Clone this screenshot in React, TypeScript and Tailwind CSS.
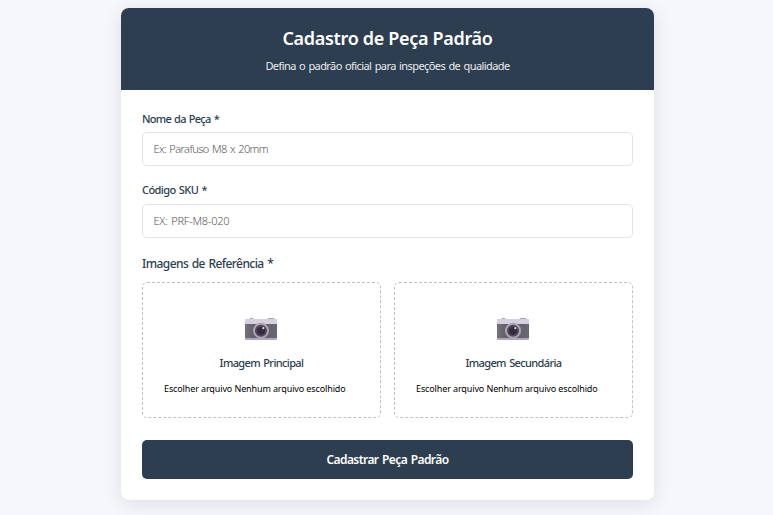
function Camera() {
  return (
    <svg width="34" height="24" viewBox="0 0 34 24" className="mr-[2px] block">
      <defs>
        <linearGradient id="cameraBody" x1="0" y1="0" x2="1" y2="0">
          <stop offset="0" stopColor="#75727c" />
          <stop offset="0.35" stopColor="#5c5965" />
          <stop offset="1" stopColor="#6b6873" />
        </linearGradient>
      </defs>
      <path d="M5 2.5L6 1.3H9L10 2.5ZM23 2.5L24 1.3H30L31 2.5Z" fill="#8b8790" />
      <rect x="1" y="2" width="32" height="21" rx="1.5" fill="#b1a4be" />
      <path d="M1 7V3.5Q1 2 2.5 2H31.5Q33 2 33 3.5V7Z" fill="#d5cfe0" />
      <rect x="1" y="7" width="32" height="14" fill="url(#cameraBody)" />
      <circle cx="17" cy="13.7" r="8" fill="#aaa4b3" />
      <circle cx="17" cy="13.7" r="6" fill="#504858" />
      <circle cx="17" cy="13.7" r="4" fill="#342b40" />
      <circle cx="19.3" cy="11.2" r="1.1" fill="#d8d2df" />
    </svg>
  );
}

function Field({ id, label, placeholder, labelClass, inputClass }: { id: string; label: string; placeholder: string; labelClass: string; inputClass: string }) {
  return (
    <div className="flex flex-col">
      <label htmlFor={id} className={`h-4 self-start whitespace-nowrap text-[11px] leading-4 font-medium [word-spacing:1px] ${labelClass}`}>{label}</label>
      <input id={id} placeholder={placeholder} className={`h-[34px] w-full rounded-[5px] border border-[#dfe3eb] bg-white px-[10.5px] pb-[2px] text-[11px] font-light outline-none [word-spacing:1px] placeholder:text-[#555555] ${inputClass}`} />
    </div>
  );
}

function Upload({ title, titleClass }: { title: string; titleClass: string }) {
  return (
    <div className="flex h-[136px] flex-col items-center rounded-[5px] border border-dashed border-[#bdc3c7] px-[21px] pt-[34px]">
      <Camera />
      <div className={`mt-[14px] h-4 whitespace-nowrap text-[11px] leading-4 font-medium [word-spacing:1px] ${titleClass}`}>{title}</div>
      <div className="mt-[10px] h-4 self-start whitespace-nowrap text-[9px] leading-4 tracking-[-0.12px] text-black">Escolher arquivo Nenhum arquivo escolhido</div>
    </div>
  );
}

export default function App() {
  return (
    <main className="flex h-[515px] justify-center overflow-hidden bg-[#f5f7fa] pt-2 pr-0 pl-[2px] font-['Noto_Sans','Open_Sans',sans-serif] text-[#2c3e50]">
      <section className="h-[492px] w-[533px] overflow-hidden rounded-[8px] bg-white shadow-[0_4px_20px_rgba(0,0,0,0.1)]">
        <header className="flex h-[82px] flex-col items-center bg-[#2c3e50] pt-[18px] text-white">
          <h1 className="h-6 whitespace-nowrap text-[18px] leading-6 font-semibold tracking-[-0.32px]">Cadastro de Peça Padrão</h1>
          <p className="mt-2 h-4 whitespace-nowrap text-[11px] leading-4 tracking-[-0.58px] opacity-90 [word-spacing:1px]">Defina o padrão oficial para inspeções de qualidade</p>
        </header>
        <form className="flex flex-col px-[21px] pt-[21px]">
          <Field id="nome" label="Nome da Peça *" placeholder="Ex: Parafuso M8 x 20mm" labelClass="tracking-[-0.75px]" inputClass="mt-[5px] tracking-[-0.58px]" />
          <div className="mt-[16px]">
            <Field id="sku" label="Código SKU *" placeholder="EX: PRF-M8-020" labelClass="tracking-[-0.58px]" inputClass="mt-[6px] tracking-[-0.23px]" />
          </div>
          <h2 className="mt-[18px] h-4 self-start whitespace-nowrap text-[12px] leading-4 font-medium tracking-[-0.57px] [word-spacing:1px]">Imagens de Referência *</h2>
          <div className="mt-[10px] grid grid-cols-2 gap-[13px]">
            <Upload title="Imagem Principal" titleClass="tracking-[-0.62px]" />
            <Upload title="Imagem Secundária" titleClass="tracking-[-0.62px]" />
          </div>
          <button type="button" className="mt-[22px] h-[39px] rounded-[5px] bg-[#2c3e50] text-[12px] font-semibold tracking-[-0.58px] text-white [word-spacing:1px]">
            <span className="whitespace-nowrap">Cadastrar Peça Padrão</span>
          </button>
        </form>
      </section>
    </main>
  );
}
